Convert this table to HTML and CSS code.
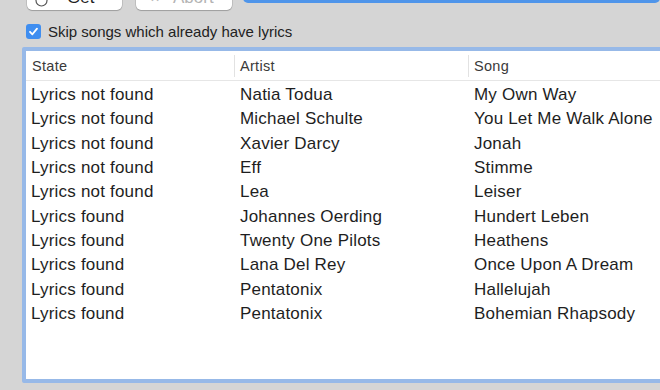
FILE: index.html
```html
<!DOCTYPE html>
<html>
<head>
<meta charset="utf-8">
<link rel="stylesheet" href="styles.css">
</head>
<body>
<div class="toolbar">
  <div class="btn btn-get">
    <svg class="ico" width="13" height="13" viewBox="0 0 13 13"><circle cx="6.5" cy="6.5" r="5.5" fill="none" stroke="#555" stroke-width="1.2"/></svg>
    <span>Get</span>
  </div>
  <div class="btn btn-abort disabled">
    <span class="x">✕</span>
    <span>Abort</span>
  </div>
  <div class="field"></div>
</div>
<label class="check-row">
  <span class="checkbox"><svg width="11" height="11" viewBox="0 0 11 11"><path d="M2 5.8 L4.4 8.3 L9 2.6" fill="none" stroke="#fff" stroke-width="1.8" stroke-linecap="round" stroke-linejoin="round"/></svg></span>
  <span class="check-label">Skip songs which already have lyrics</span>
</label>
<div class="table-frame">
  <div class="thead">
    <div class="th c1">State</div>
    <div class="th c2">Artist</div>
    <div class="th c3">Song</div>
  </div>
  <div class="tbody">
    <div class="td">Lyrics not found</div><div class="td">Natia Todua</div><div class="td">My Own Way</div>
    <div class="td">Lyrics not found</div><div class="td">Michael Schulte</div><div class="td">You Let Me Walk Alone</div>
    <div class="td">Lyrics not found</div><div class="td">Xavier Darcy</div><div class="td">Jonah</div>
    <div class="td">Lyrics not found</div><div class="td">Eff</div><div class="td">Stimme</div>
    <div class="td">Lyrics not found</div><div class="td">Lea</div><div class="td">Leiser</div>
    <div class="td">Lyrics found</div><div class="td">Johannes Oerding</div><div class="td">Hundert Leben</div>
    <div class="td">Lyrics found</div><div class="td">Twenty One Pilots</div><div class="td">Heathens</div>
    <div class="td">Lyrics found</div><div class="td">Lana Del Rey</div><div class="td">Once Upon A Dream</div>
    <div class="td">Lyrics found</div><div class="td">Pentatonix</div><div class="td">Hallelujah</div>
    <div class="td">Lyrics found</div><div class="td">Pentatonix</div><div class="td">Bohemian Rhapsody</div>
  </div>
</div>
</body>
</html>
```
FILE: styles.css
```css
html, body {
  margin: 0;
  padding: 0;
}
body {
  width: 660px;
  height: 390px;
  overflow: hidden;
  background: #d5d5d5;
  font-family: "Liberation Sans", Arial, sans-serif;
  color: #1e1e1e;
}
.toolbar {
  display: flex;
  align-items: flex-start;
  margin-top: -14px;
  padding-left: 27px;
  height: 24px;
}
.btn {
  height: 24px;
  box-sizing: border-box;
  background: #fff;
  border-radius: 5px;
  box-shadow: 0 0 0 0.5px rgba(0,0,0,0.18), 0 1px 1px rgba(0,0,0,0.18);
  display: flex;
  align-items: center;
  font-size: 17px;
  line-height: 24px;
  color: #222;
}
.btn-get {
  width: 95px;
  padding-left: 8px;
}
.btn-get .ico {
  margin-right: 19px;
  margin-top: 4px;
}
.btn-abort {
  width: 96px;
  margin-left: 14px;
  padding-left: 14px;
}
.disabled {
  color: #b4b4b4;
}
.btn-abort .x {
  font-size: 12px;
  margin-right: 13px;
}
.field {
  flex: 1;
  margin-left: 11px;
  height: 17px;
  background: #4f95ea;
  border-radius: 5px;
}
.check-row {
  display: flex;
  align-items: center;
  margin-top: 14px;
  padding-left: 26px;
  height: 15px;
}
.checkbox {
  width: 15px;
  height: 15px;
  box-sizing: border-box;
  border-radius: 3px;
  background: #3f8ef0;
  display: flex;
  align-items: center;
  justify-content: center;
}
.check-label {
  margin-left: 7px;
  font-size: 15px;
  color: #222;
}
.table-frame {
  margin-top: 8px;
  margin-left: 22px;
  width: 700px;
  height: 336px;
  box-sizing: border-box;
  border: 4px solid #97b9e8;
  border-radius: 2px;
  background: #fff;
}
.thead {
  display: grid;
  grid-template-columns: 208px 234px 1fr;
  align-items: center;
  height: 29px;
  border-bottom: 1px solid #e6e6e6;
}
.th {
  height: 22px;
  line-height: 22px;
  font-size: 14.5px;
  color: #3a3a3a;
  letter-spacing: 0.3px;
}
.c1 {
  padding-left: 6px;
}
.c2, .c3 {
  border-left: 1px solid #e2e2e2;
  padding-left: 5px;
}
.tbody {
  display: grid;
  grid-template-columns: 208px 234px 1fr;
  grid-auto-rows: 24.33px;
  padding-top: 2px;
}
.td {
  font-size: 17px;
  line-height: 24.33px;
  padding-left: 6px;
  white-space: nowrap;
  letter-spacing: 0.2px;
}
.tbody .td:nth-child(3n+1) {
  padding-left: 5px;
}
```
